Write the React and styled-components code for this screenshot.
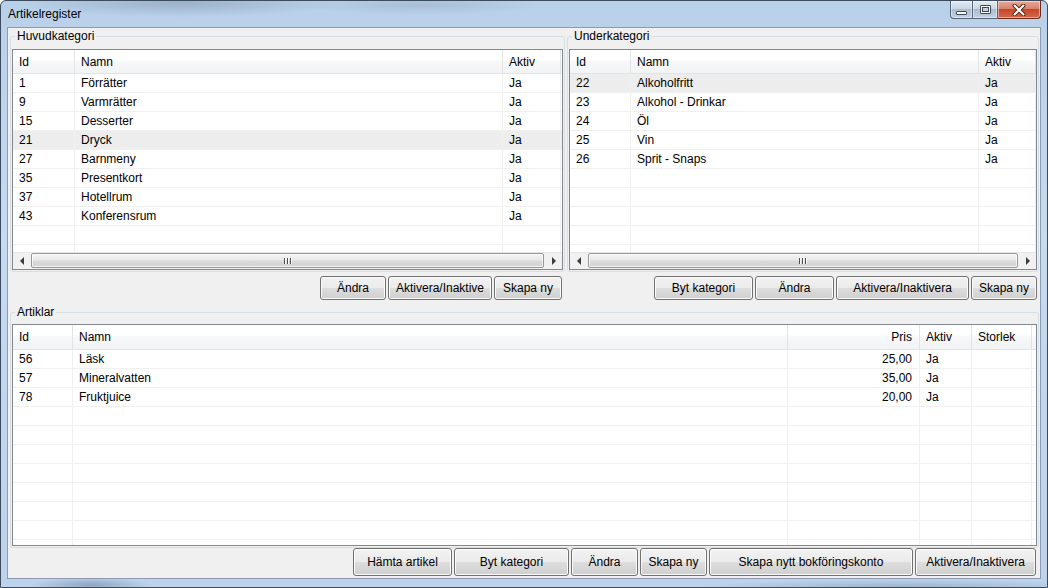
import React from 'react'
import styled, { createGlobalStyle } from 'styled-components'

const GlobalStyle = createGlobalStyle`
  html, body {
    margin: 0;
    padding: 0;
    background: #ffffff;
  }
  body {
    font-family: "Liberation Sans", Arial, sans-serif;
    font-size: 12px;
    color: #000;
  }
  * {
    box-sizing: border-box;
  }
`

const Window = styled.div`
  width: 1048px;
  height: 588px;
  display: flex;
  flex-direction: column;
  border: 1px solid #3d4b5e;
  border-radius: 6px 6px 0 0;
  overflow: hidden;
  background:
    radial-gradient(ellipse 160px 14px at 180px 2px, rgba(120, 140, 165, 0.45), transparent),
    radial-gradient(ellipse 120px 10px at 420px 4px, rgba(130, 150, 175, 0.3), transparent),
    radial-gradient(ellipse 60px 8px at 90px 584px, rgba(90, 110, 140, 0.45), transparent),
    radial-gradient(ellipse 200px 8px at 900px 586px, rgba(90, 110, 140, 0.3), transparent),
    linear-gradient(180deg, #b9d0e9 0%, #c6dbf0 40%, #bcd3eb 100%);
`

const TitleBar = styled.div`
  height: 26px;
  flex: none;
  display: flex;
  align-items: flex-start;
  padding-left: 7px;
`

const Title = styled.div`
  height: 26px;
  line-height: 26px;
  font-size: 12px;
  color: #000;
`

const Caption = styled.div`
  margin-left: auto;
  margin-right: 6px;
  display: flex;
  height: 18px;
`

const CapBtn = styled.div`
  width: ${p => p.$w}px;
  height: 18px;
  display: flex;
  align-items: center;
  justify-content: center;
  border: 1px solid ${p => (p.$close ? '#6b2a1d' : '#55657a')};
  border-top: none;
  border-left: ${p => (p.$first ? '1px solid #55657a' : 'none')};
  border-radius: ${p => (p.$first ? '0 0 0 4px' : p.$close ? '0 0 4px 0' : '0')};
  background: ${p =>
    p.$close
      ? 'linear-gradient(180deg, #e9a897 0%, #d9826c 45%, #c6472c 50%, #d56a48 100%)'
      : 'linear-gradient(180deg, #e4ebf3 0%, #cbd6e3 45%, #adbccf 50%, #c3d1e2 100%)'};
  box-shadow: inset 0 0 0 1px rgba(255, 255, 255, 0.45);
`

const MinGlyph = styled.div`
  width: 11px;
  height: 4px;
  margin-top: 6px;
  border: 1px solid #3b4656;
  background: #fff;
  border-radius: 1px;
`

const MaxGlyph = styled.div`
  width: 11px;
  height: 9px;
  border: 1px solid #3b4656;
  border-radius: 1px;
  background: #fff;
  display: flex;
  align-items: center;
  justify-content: center;

  &::after {
    content: '';
    width: 5px;
    height: 3px;
    border: 1px solid #3b4656;
    background: #c4d2e2;
  }
`

const Client = styled.div`
  flex: 1;
  margin: 0 6px 8px 6px;
  border: 1px solid #8b9bb0;
  background: #f0f0f0;
  padding: 1px 1px 0 2px;
  display: flex;
  flex-direction: column;
`

const GroupRow = styled.div`
  display: flex;
  gap: 2px;
  margin-top: ${p => p.$mt || 0}px;
`

const Group = styled.fieldset`
  margin: 0;
  padding: ${p => p.$pt}px 1px 1px 1px;
  border: 1px solid #d5dfe5;
  border-radius: 3px;
  min-width: 0;
  width: ${p => p.$w}px;
  flex: none;
`

const Legend = styled.legend`
  margin-left: 3px;
  padding: 0 2px;
  font-size: 12px;
  line-height: 14px;
  color: #000;
`

const ListBox = styled.div`
  height: ${p => p.$h}px;
  border: 1px solid #828790;
  background: #fff;
  display: flex;
  flex-direction: column;
  overflow: hidden;
`

const HeaderRow = styled.div`
  flex: none;
  display: flex;
  height: ${p => p.$h}px;
  border-bottom: 1px solid #e2e3e5;
  background: linear-gradient(180deg, #ffffff 0%, #ffffff 40%, #f7f8f9 50%, #f2f3f4 100%);
`

const HeaderCell = styled.div`
  width: ${p => p.$w}px;
  flex: none;
  display: flex;
  align-items: center;
  justify-content: ${p => (p.$right ? 'flex-end' : 'flex-start')};
  padding: ${p => (p.$right ? '0 7px 0 6px' : '0 6px')};
  border-right: 1px solid #e3e4e6;
  white-space: nowrap;
  overflow: hidden;
`

const Filler = styled.div`
  flex: 1;
`

const Body = styled.div`
  flex: 1;
  min-height: 0;
  overflow: hidden;
  display: flex;
  flex-direction: column;
`

const Row = styled.div`
  flex: none;
  display: flex;
  height: 19px;
  border-bottom: 1px solid #f0f0f0;
  background: ${p => (p.$selected ? '#ededed' : 'transparent')};
`

const Cell = styled.div`
  width: ${p => p.$w}px;
  flex: none;
  display: flex;
  align-items: center;
  justify-content: ${p => (p.$right ? 'flex-end' : 'flex-start')};
  padding: ${p => (p.$right ? '0 7px 0 6px' : '0 6px')};
  border-right: 1px solid #f0f0f0;
  white-space: nowrap;
  overflow: hidden;
`

const HScroll = styled.div`
  flex: none;
  height: 17px;
  display: flex;
  background: #f1f1f1;
  border-top: 1px solid #e6e6e6;
`

const Arrow = styled.div`
  width: 17px;
  flex: none;
  display: flex;
  align-items: center;
  justify-content: center;

  &::before {
    content: '';
    width: 0;
    height: 0;
    border-top: 4px solid transparent;
    border-bottom: 4px solid transparent;
    ${p =>
      p.$dir === 'left'
        ? 'border-right: 4px solid #3c3c3c;'
        : 'border-left: 4px solid #3c3c3c;'}
  }
`

const Thumb = styled.div`
  flex: 1;
  margin: 0 1px 1px 1px;
  border: 1px solid #979797;
  border-radius: 2px;
  background: linear-gradient(180deg, #f4f4f4 0%, #e9e9e9 45%, #dadada 55%, #d2d2d2 100%);
  box-shadow: inset 0 0 0 1px rgba(255, 255, 255, 0.7);
  display: flex;
  align-items: center;
  justify-content: center;
  gap: 1px;
`

const GripLine = styled.div`
  width: 1px;
  height: 6px;
  background: #4f4f4f;
  box-shadow: 1px 0 0 #ffffff;
  margin-right: 1px;
`

const ButtonBar = styled.div`
  display: flex;
  margin-top: ${p => p.$mt || 0}px;
`

const ButtonGroup = styled.div`
  width: ${p => (p.$w ? `${p.$w}px` : 'auto')};
  flex: ${p => (p.$w ? 'none' : '1')};
  display: flex;
  justify-content: flex-end;
  gap: 2px;
  padding-right: ${p => p.$pr || 0}px;
  margin-right: ${p => p.$mr || 0}px;
`

const Button = styled.button`
  width: ${p => p.$w}px;
  height: ${p => p.$h}px;
  flex: none;
  padding: 0;
  border: 1px solid #707070;
  border-radius: 3px;
  background: linear-gradient(180deg, #f2f2f2 0%, #ebebeb 48%, #dddddd 52%, #cfcfcf 100%);
  box-shadow: inset 0 0 0 1px #fbfbfb;
  font-family: "Liberation Sans", Arial, sans-serif;
  font-size: 12px;
  color: #000;
  white-space: nowrap;
  overflow: hidden;
`

const huvudCols = [
  { title: 'Id', w: 62 },
  { title: 'Namn', w: 428 },
  { title: 'Aktiv', w: 58 }
]

const huvudRows = [
  ['1', 'Förrätter', 'Ja'],
  ['9', 'Varmrätter', 'Ja'],
  ['15', 'Desserter', 'Ja'],
  ['21', 'Dryck', 'Ja'],
  ['27', 'Barnmeny', 'Ja'],
  ['35', 'Presentkort', 'Ja'],
  ['37', 'Hotellrum', 'Ja'],
  ['43', 'Konferensrum', 'Ja']
]

const underCols = [
  { title: 'Id', w: 61 },
  { title: 'Namn', w: 348 },
  { title: 'Aktiv', w: 57 }
]

const underRows = [
  ['22', 'Alkoholfritt', 'Ja'],
  ['23', 'Alkohol - Drinkar', 'Ja'],
  ['24', 'Öl', 'Ja'],
  ['25', 'Vin', 'Ja'],
  ['26', 'Sprit - Snaps', 'Ja']
]

const artikelCols = [
  { title: 'Id', w: 60 },
  { title: 'Namn', w: 715 },
  { title: 'Pris', w: 132, right: true },
  { title: 'Aktiv', w: 52 },
  { title: 'Storlek', w: 60 }
]

const artikelRows = [
  ['56', 'Läsk', '25,00', 'Ja', ''],
  ['57', 'Mineralvatten', '35,00', 'Ja', ''],
  ['78', 'Fruktjuice', '20,00', 'Ja', '']
]

const ListView = ({ columns, rows, selected, totalRows, height, headerHeight, scroll }) => {
  const all = Array.from({ length: totalRows }, (_, i) => rows[i] || columns.map(() => ''))
  return (
    <ListBox $h={height}>
      <HeaderRow $h={headerHeight}>
        {columns.map(c => (
          <HeaderCell key={c.title} $w={c.w} $right={c.right}>
            {c.title}
          </HeaderCell>
        ))}
        <Filler />
      </HeaderRow>
      <Body>
        {all.map((r, i) => (
          <Row key={i} $selected={i === selected}>
            {columns.map((c, j) => (
              <Cell key={c.title} $w={c.w} $right={c.right}>
                {r[j]}
              </Cell>
            ))}
            <Filler />
          </Row>
        ))}
      </Body>
      {scroll && (
        <HScroll>
          <Arrow $dir="left" />
          <Thumb>
            <GripLine />
            <GripLine />
            <GripLine />
          </Thumb>
          <Arrow $dir="right" />
        </HScroll>
      )}
    </ListBox>
  )
}

const CloseGlyph = () => (
  <svg width="14" height="12" viewBox="0 0 14 12">
    <path d="M2.5 1.5 L11.5 10.5 M11.5 1.5 L2.5 10.5" stroke="#5a2418" strokeWidth="4" strokeLinecap="round" />
    <path d="M2.5 1.5 L11.5 10.5 M11.5 1.5 L2.5 10.5" stroke="#ffffff" strokeWidth="2" strokeLinecap="round" />
  </svg>
)

export default function App() {
  return (
    <>
      <GlobalStyle />
      <Window>
        <TitleBar>
          <Title>Artikelregister</Title>
          <Caption>
            <CapBtn $w={23} $first>
              <MinGlyph />
            </CapBtn>
            <CapBtn $w={25}>
              <MaxGlyph />
            </CapBtn>
            <CapBtn $w={43} $close>
              <CloseGlyph />
            </CapBtn>
          </Caption>
        </TitleBar>
        <Client>
          <GroupRow>
            <Group $w={555} $pt={6}>
              <Legend>Huvudkategori</Legend>
              <ListView
                columns={huvudCols}
                rows={huvudRows}
                selected={3}
                totalRows={10}
                height={221}
                headerHeight={24}
                scroll
              />
            </Group>
            <Group $w={472} $pt={6}>
              <Legend>Underkategori</Legend>
              <ListView
                columns={underCols}
                rows={underRows}
                selected={0}
                totalRows={10}
                height={221}
                headerHeight={24}
                scroll
              />
            </Group>
          </GroupRow>
          <ButtonBar $mt={4}>
            <ButtonGroup $w={555} $pr={3} $mr={2}>
              <Button $w={66} $h={24}>Ändra</Button>
              <Button $w={104} $h={24}>Aktivera/Inaktive</Button>
              <Button $w={68} $h={24}>Skapa ny</Button>
            </ButtonGroup>
            <ButtonGroup $w={472} $pr={2}>
              <Button $w={99} $h={24}>Byt kategori</Button>
              <Button $w={79} $h={24}>Ändra</Button>
              <Button $w={133} $h={24}>Aktivera/Inaktivera</Button>
              <Button $w={66} $h={24}>Skapa ny</Button>
            </ButtonGroup>
          </ButtonBar>
          <GroupRow $mt={5}>
            <Group $w={1029} $pt={5}>
              <Legend>Artiklar</Legend>
              <ListView
                columns={artikelCols}
                rows={artikelRows}
                selected={-1}
                totalRows={12}
                height={222}
                headerHeight={25}
              />
            </Group>
          </GroupRow>
          <ButtonBar>
            <ButtonGroup $pr={3}>
              <Button $w={99} $h={28}>Hämta artikel</Button>
              <Button $w={115} $h={28}>Byt kategori</Button>
              <Button $w={67} $h={28}>Ändra</Button>
              <Button $w={67} $h={28}>Skapa ny</Button>
              <Button $w={204} $h={28}>Skapa nytt bokföringskonto</Button>
              <Button $w={121} $h={28}>Aktivera/Inaktivera</Button>
            </ButtonGroup>
          </ButtonBar>
        </Client>
      </Window>
    </>
  )
}
